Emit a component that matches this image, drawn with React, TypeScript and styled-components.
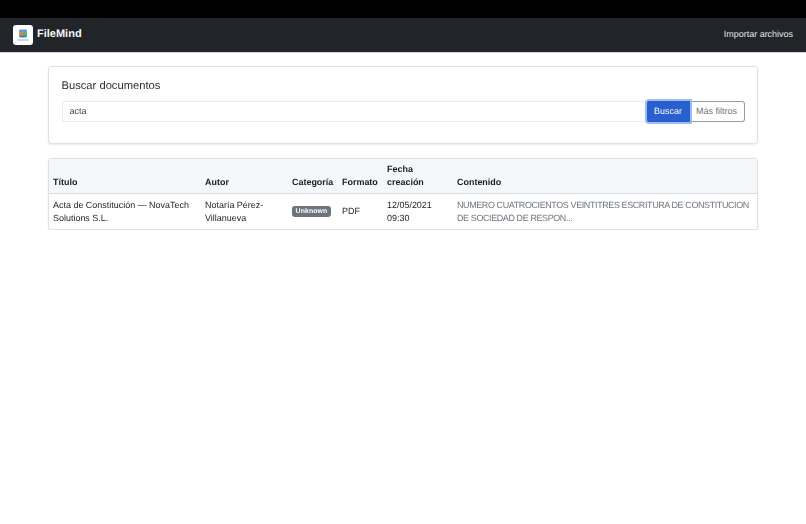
import React from "react";
import styled, { createGlobalStyle } from "styled-components";

const Global = createGlobalStyle`
  html, body { margin: 0; padding: 0; background: #fff; }
  body { font-family: "Liberation Sans", Arial, sans-serif; color: #212529; font-size: 8.96px; line-height: 13.44px; text-rendering: geometricPrecision; }
  * { box-sizing: border-box; }
`;

const TopStrip = styled.div`height: 18px; background: #000;`;

const Navbar = styled.nav`
  height: 35px;
  background: #212529;
  display: flex;
  align-items: center;
  justify-content: space-between;
  padding: 0 13px;
  border-bottom: 1px solid #d5d7da;
`;

const Brand = styled.div`
  display: flex;
  align-items: center;
  gap: 4px;
  color: #f4f5f6;
  font-size: 11px;
  font-weight: 700;
`;

const LogoTile = styled.div`
  width: 20px;
  height: 20px;
  background: #fff;
  border-radius: 3px;
  display: flex;
  align-items: center;
  justify-content: center;
`;

const NavLink = styled.a`
  color: #e6e7e8;
`;

const Main = styled.main`
  width: 710px;
  margin: 13px 0 0 48px;
  display: flex;
  flex-direction: column;
  gap: 14px;
  opacity: 0.999;
`;

const Card = styled.section`
  background: #fff;
  border: 1px solid #dfe1e3;
  border-radius: 3px;
  box-shadow: 0 1px 2px rgba(0, 0, 0, 0.09);
  overflow: hidden;
`;

const SearchCard = styled(Card)`
  height: 78px;
  padding: 13px 12.5px 0;
`;

const Heading = styled.h2`
  margin: 0 0 7.5px;
  font-size: 11.2px;
  line-height: 13.44px;
  font-weight: 400;
  color: #2b2f33;
`;

const SearchRow = styled.div`
  display: flex;
  align-items: stretch;
  height: 21.3px;
`;

const SearchInput = styled.input`
  flex: 1;
  min-width: 0;
  border: 1px solid #e9ebed;
  border-right: none;
  border-radius: 3px 0 0 3px;
  padding: 0 7px;
  font: inherit;
  text-rendering: inherit;
  color: #3f4448;
  outline: none;
`;

const PrimaryButton = styled.button`
  width: 43px;
  background: #2a5fd0;
  color: #fff;
  border: none;
  border-radius: 2px 0 0 2px;
  box-shadow: 0 0 0 2px #9dbcf2;
  font: inherit;
  text-rendering: inherit;
  padding: 0;
  position: relative;
`;

const GhostButton = styled.button`
  width: 55px;
  background: #fff;
  color: #6c757d;
  border: 1px solid #969ca2;
  border-left: none;
  border-radius: 0 3px 3px 0;
  font: inherit;
  text-rendering: inherit;
  padding: 0;
`;

const Table = styled.table`
  width: 100%;
  table-layout: fixed;
  border-collapse: collapse;
  line-height: 13px;
`;

const HeadRow = styled.tr`
  background: #f6f7f8;
  border-bottom: 1px solid #d9dbdd;
`;

const Th = styled.th`
  text-align: left;
  vertical-align: bottom;
  font-weight: 700;
  padding: 4px;
  color: #1c1f22;
`;

const Td = styled.td<{ $muted?: boolean }>`
  vertical-align: middle;
  padding: 4.5px 4px;
  color: ${(p) => (p.$muted ? "#6c757d" : "#212529")};
  letter-spacing: ${(p) => (p.$muted ? "-0.38px" : "0")};
`;

const Badge = styled.span`
  display: inline-block;
  background: #6c757d;
  color: #fff;
  font-size: 6.9px;
  line-height: 11px;
  font-weight: 700;
  letter-spacing: 0.1px;
  padding: 0 3.6px;
  border-radius: 3px;
  vertical-align: middle;
`;

const Logo = () => (
  <svg width="16" height="16" viewBox="0 0 16 16">
    <rect x="4" y="2.5" width="8" height="3" rx="1" fill="#5b9fd6" />
    <rect x="4" y="5" width="4" height="4.5" fill="#cf8a5a" />
    <rect x="8" y="5" width="4" height="4.5" fill="#5fae74" />
    <rect x="4.5" y="8.5" width="7" height="2" rx="0.8" fill="#3f7fb5" />
    <rect x="2.5" y="12.5" width="11" height="1" fill="#8fb4d4" />
  </svg>
);

export default function App() {
  return (
    <>
      <Global />
      <TopStrip />
      <Navbar>
        <Brand>
          <LogoTile><Logo /></LogoTile>
          FileMind
        </Brand>
        <NavLink>Importar archivos</NavLink>
      </Navbar>
      <Main>
        <SearchCard>
          <Heading>Buscar documentos</Heading>
          <SearchRow>
            <SearchInput defaultValue="acta" />
            <PrimaryButton>Buscar</PrimaryButton>
            <GhostButton>Más filtros</GhostButton>
          </SearchRow>
        </SearchCard>
        <Card>
          <Table>
            <colgroup>
              <col style={{ width: 152 }} />
              <col style={{ width: 87 }} />
              <col style={{ width: 50 }} />
              <col style={{ width: 45 }} />
              <col style={{ width: 70 }} />
              <col />
            </colgroup>
            <thead>
              <HeadRow>
                <Th>Título</Th>
                <Th>Autor</Th>
                <Th>Categoría</Th>
                <Th>Formato</Th>
                <Th>Fecha creación</Th>
                <Th>Contenido</Th>
              </HeadRow>
            </thead>
            <tbody>
              <tr>
                <Td>Acta de Constitución — NovaTech Solutions S.L.</Td>
                <Td>Notaría Pérez-Villanueva</Td>
                <Td><Badge>Unknown</Badge></Td>
                <Td>PDF</Td>
                <Td>12/05/2021 09:30</Td>
                <Td $muted>NUMERO CUATROCIENTOS VEINTITRES ESCRITURA DE CONSTITUCION DE SOCIEDAD DE RESPON...</Td>
              </tr>
            </tbody>
          </Table>
        </Card>
      </Main>
    </>
  );
}
